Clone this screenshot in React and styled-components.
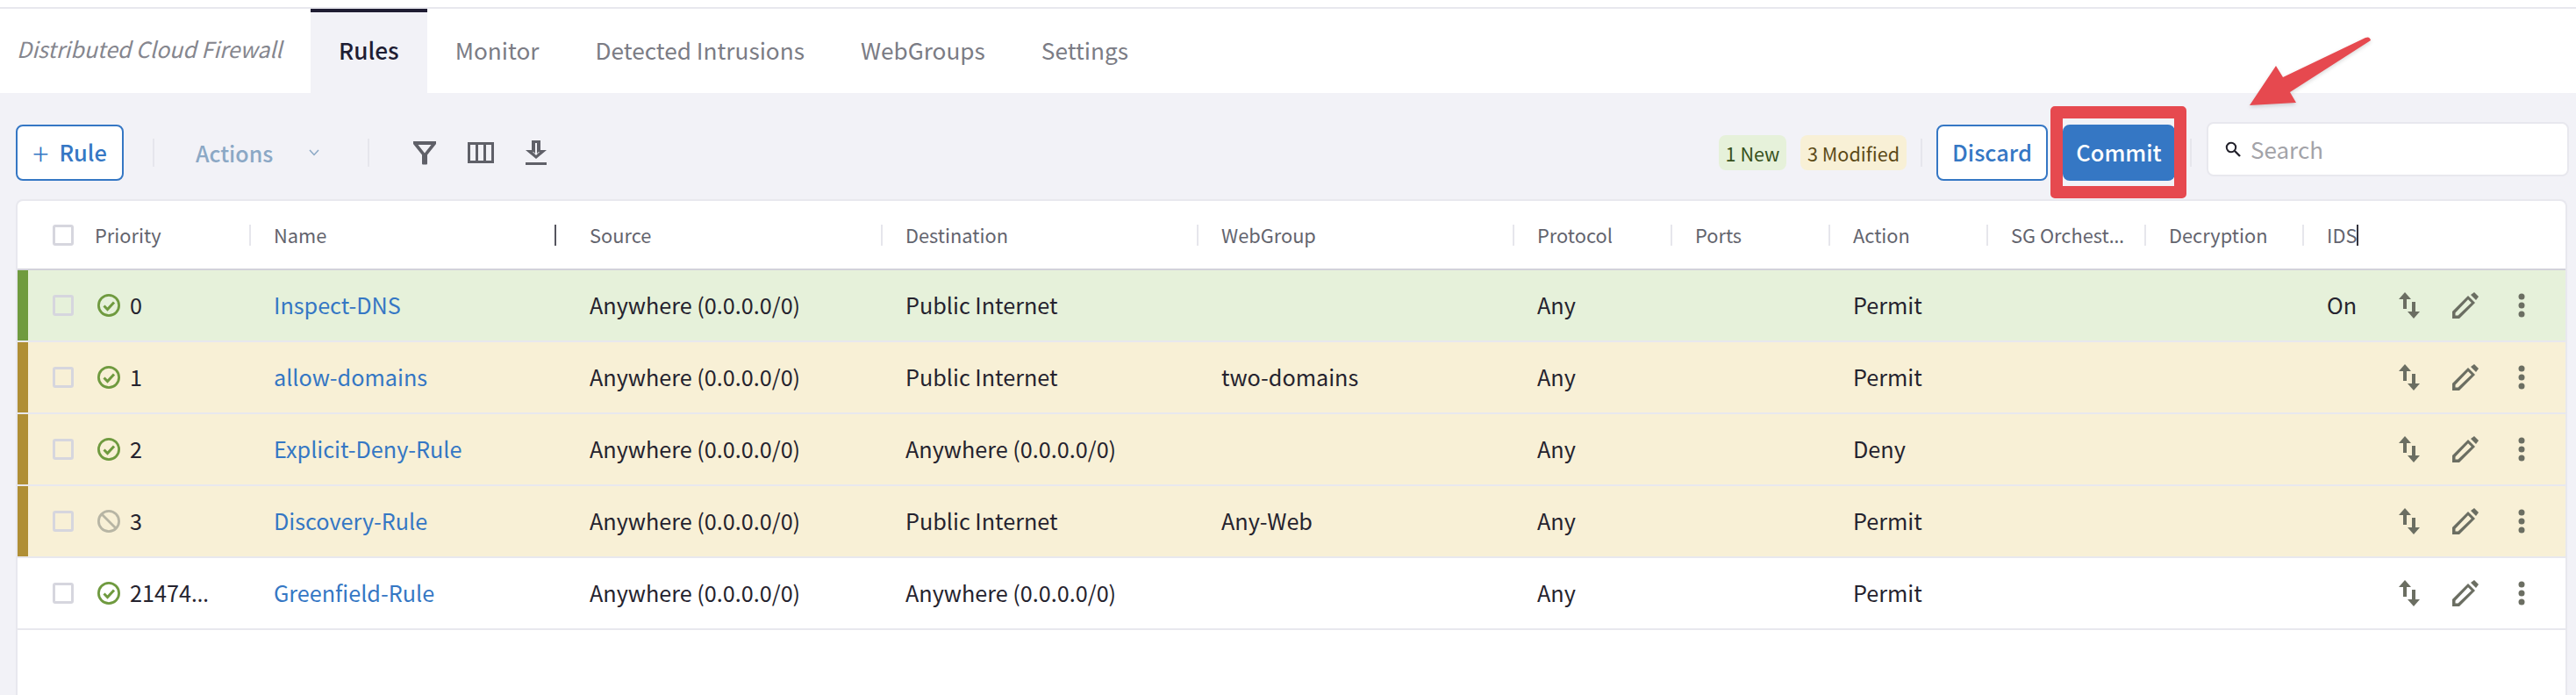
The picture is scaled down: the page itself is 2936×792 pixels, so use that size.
import React from 'react'
import styled, { createGlobalStyle } from 'styled-components'

const font = `"Noto Sans CJK SC", "Noto Sans", sans-serif`

const GlobalStyle = createGlobalStyle`
  html, body {
    margin: 0;
    height: 792px;
    overflow: hidden;
    background: #f2f2f7;
    font-family: ${font};
  }
  * {
    box-sizing: border-box;
  }
`

const COLUMNS = '264px 360px 360px 360px 360px 180px 180px 180px 180px 180px 1fr'

const tabs = ['Rules', 'Monitor', 'Detected Intrusions', 'WebGroups', 'Settings']

const columns = [
  { label: 'Name' },
  { label: 'Source', dark: true },
  { label: 'Destination' },
  { label: 'WebGroup' },
  { label: 'Protocol' },
  { label: 'Ports' },
  { label: 'Action' },
  { label: 'SG Orchest', cut: true },
  { label: 'Decryption' },
]

const rules = [
  { id: 1, state: 'new', enabled: true, priority: '0', name: 'Inspect-DNS', source: 'Anywhere (0.0.0.0/0)', destination: 'Public Internet', webgroup: '', action: 'Permit', ids: 'On' },
  { id: 2, state: 'modified', enabled: true, priority: '1', name: 'allow-domains', source: 'Anywhere (0.0.0.0/0)', destination: 'Public Internet', webgroup: 'two-domains', action: 'Permit', ids: '' },
  { id: 3, state: 'modified', enabled: true, priority: '2', name: 'Explicit-Deny-Rule', source: 'Anywhere (0.0.0.0/0)', destination: 'Anywhere (0.0.0.0/0)', webgroup: '', action: 'Deny', ids: '' },
  { id: 4, state: 'modified', enabled: false, priority: '3', name: 'Discovery-Rule', source: 'Anywhere (0.0.0.0/0)', destination: 'Public Internet', webgroup: 'Any-Web', action: 'Permit', ids: '' },
  { id: 5, state: 'none', enabled: true, priority: '21474', cut: true, name: 'Greenfield-Rule', source: 'Anywhere (0.0.0.0/0)', destination: 'Anywhere (0.0.0.0/0)', webgroup: '', action: 'Permit', ids: '' },
]

const rowColors = {
  new: { bg: '#e6f1da', stripe: '#709b3f' },
  modified: { bg: '#f8f0d6', stripe: '#b08f35' },
  none: { bg: '#ffffff', stripe: 'transparent' },
}

const FilterIcon = () => (
  <svg width='26' height='28' viewBox='0 0 26 28'>
    <path fill='#5f6068' fillRule='evenodd' d='M0 1h26v3L16 16.500V26.500q0 1-1 1h-4q-1 0-1-1V16.500L0 4zM5.500 5 13 14.500 20.500 5z' />
  </svg>
)

const ColumnsIcon = () => (
  <svg width='30' height='24' viewBox='0 0 30 24'>
    <path fill='#5f6068' fillRule='evenodd' d='M0 0h30v24H0zM3 3v18h6V3zM12 3v18h6V3zM21 3v18h6V3z' />
  </svg>
)

const DownloadIcon = () => (
  <svg width='24' height='28' viewBox='0 0 24 28'>
    <path fill='#5f6068' fillRule='evenodd' d='M7 0h10v11h7L12 21 0 11h7zM11 3v12l-2-2-1 0 4 4 4-4-1 0-2 2V3z' />
    <rect x='0' y='25' width='24' height='3' fill='#5f6068' />
  </svg>
)

const SearchIcon = () => (
  <svg width='18' height='18' viewBox='0 0 18 18' fill='none' stroke='#22212b'>
    <circle cx='7' cy='7' r='5.200' strokeWidth='2' />
    <path d='M11 11l6 6' strokeWidth='2.400' />
  </svg>
)

const EnabledIcon = () => (
  <svg width='26' height='26' viewBox='0 0 26 26' fill='none' stroke='#6f9a3f' strokeWidth='2.800'>
    <circle cx='13' cy='13' r='11.600' />
    <path d='M7.500 13.500l4 4 7.500-8' strokeWidth='3' />
  </svg>
)

const DisabledIcon = () => (
  <svg width='26' height='26' viewBox='0 0 26 26' fill='none' stroke='#b7b5a4' strokeWidth='2.800'>
    <circle cx='13' cy='13' r='11.600' />
    <path d='M4.500 4.500l17 17' />
  </svg>
)

const SortIcon = () => (
  <svg width='24' height='30' viewBox='0 0 24 30'>
    <path fill='#6b6e62' d='M7 0l7 8H9v11H5V8H0zM15 11h4v11h5l-7 8-7-8h5z' />
  </svg>
)

const PencilIcon = () => (
  <svg width='30' height='30' viewBox='0 0 30 30'>
    <path fill='#6b6e62' fillRule='evenodd' d='M0 30V22L18 4 26 12 8 30zM3.500 23.500V26.500H6.500L21.800 12 18 8.200z' />
    <path fill='#6b6e62' d='M21 3L25 0l5 5-3 4z' />
  </svg>
)

const DotsIcon = () => (
  <svg width='8' height='28' viewBox='0 0 8 28'>
    <g fill='#6b6e62'>
      <circle cx='4' cy='4' r='3.500' />
      <circle cx='4' cy='14' r='3.500' />
      <circle cx='4' cy='24' r='3.500' />
    </g>
  </svg>
)

const Arrow = styled.svg`
  position: absolute;
  left: 2550px;
  top: 35px;
  filter: drop-shadow(0 2px 2px rgba(0, 0, 0, 0.15));
`

const Page = styled.div`
  position: relative;
  height: 792px;
  display: flex;
  flex-direction: column;
  overflow: hidden;
  background: #f2f2f7;
`

const TopStrip = styled.div`
  height: 10px;
  background: #fff;
  border-bottom: 2px solid #e8e8ee;
`

const TabBar = styled.div`
  height: 96px;
  background: #fff;
  display: flex;
  align-items: stretch;
`

const ModuleTitle = styled.div`
  width: 354px;
  padding-left: 19px;
  padding-bottom: 6px;
  display: flex;
  align-items: center;
  font-size: 25px;
  font-style: italic;
  color: #85868e;
`

const Tab = styled.div`
  padding: 0 32px 6px;
  display: flex;
  align-items: center;
  font-size: 26.2px;
  font-weight: ${(p) => (p.$active ? 500 : 400)};
  color: ${(p) => (p.$active ? '#1f1d33' : '#7b7c85')};
  background: ${(p) => (p.$active ? '#f2f2f7' : 'transparent')};
  border-top: 4px solid ${(p) => (p.$active ? '#1f1d33' : 'transparent')};
`

const Toolbar = styled.div`
  height: 121px;
  padding: 36px 8px 21px 18px;
  display: flex;
  align-items: center;
`

const Button = styled.button`
  width: ${(p) => p.$width}px;
  height: 64px;
  padding: 0;
  display: flex;
  align-items: center;
  justify-content: center;
  font-family: inherit;
  font-size: 25.4px;
  font-weight: 500;
  line-height: 1;
  border-radius: 8px;
  border: 2px solid #3577c4;
  color: ${(p) => (p.$primary ? '#fff' : '#3577c4')};
  background: ${(p) => (p.$primary ? '#3577c4' : '#fff')};
`

const Plus = styled.span`
  font-size: 34px;
  font-weight: 300;
  margin-right: 12px;
`

const Divider = styled.div`
  width: 2px;
  height: 32px;
  background: #e6e6ec;
  margin: ${(p) => p.$margin};
`

const ActionsMenu = styled.div`
  width: 141px;
  display: flex;
  align-items: center;
  justify-content: space-between;
  margin-right: 55px;
  font-size: 25px;
  font-weight: 500;
  color: #8ba8c5;
`

const ToolIcons = styled.div`
  display: flex;
  align-items: center;
  gap: 36px;
`

const ToolIcon = styled.span`
  display: flex;
`

const RightGroup = styled.div`
  margin-left: auto;
  display: flex;
  align-items: center;
`

const Chip = styled.span`
  width: ${(p) => p.$width}px;
  height: 40px;
  margin-right: 16px;
  display: flex;
  align-items: center;
  justify-content: center;
  border-radius: 8px;
  font-size: 21.6px;
  white-space: nowrap;
  background: ${(p) => (p.$kind === 'new' ? '#e6f1da' : '#f8f0d6')};
  color: ${(p) => (p.$kind === 'new' ? '#38511c' : '#5c4a16')};
`

const CommitWrap = styled.div`
  position: relative;
  margin-left: 17px;
  &::after {
    content: '';
    position: absolute;
    top: -21px;
    bottom: -20px;
    left: -14px;
    right: -13px;
    border: 14px solid #e6494f;
    border-radius: 5px;
  }
`

const SearchBox = styled.div`
  width: 413px;
  height: 62px;
  margin-bottom: 9px;
  padding-left: 19px;
  display: flex;
  align-items: center;
  gap: 11px;
  background: #fff;
  border: 2px solid #e8e8ee;
  border-radius: 8px;
  font-size: 26px;
  color: #a3a3a8;
`

const Card = styled.div`
  flex: 1;
  margin: 0 10px 0 18px;
  background: #fff;
  border: 2px solid #e8e8ee;
  border-bottom: none;
  border-radius: 8px 8px 0 0;
`

const HeaderRow = styled.div`
  display: grid;
  grid-template-columns: ${COLUMNS};
  height: 79px;
  border-bottom: 2px solid #d2d2da;
  font-size: 21.8px;
  color: #63646e;
`

const HeaderCell = styled.div`
  position: relative;
  min-width: 0;
  padding-left: 28px;
  display: flex;
  align-items: center;
  &::before {
    content: '';
    position: absolute;
    top: 27px;
    left: ${(p) => (p.$dark ? '-12px' : '0')};
    width: 2px;
    height: 24px;
    background: ${(p) => (p.$dark ? '#55555f' : '#e6e6ec')};
  }
`

const HeaderLabel = styled.span`
  white-space: nowrap;
`

const Dots = styled.span`
  font-family: 'Noto Sans', sans-serif;
  letter-spacing: 1px;
`

const Caret = styled.span`
  width: 2px;
  height: 24px;
  background: #33323c;
`

const HeaderFirst = styled.div`
  padding-left: 40px;
  display: flex;
  align-items: center;
  gap: 24px;
`

const CheckBox = styled.span`
  width: 24px;
  height: 24px;
  flex: none;
  background: ${(p) => (p.$tinted ? 'transparent' : '#fff')};
  border: 3px solid #d6d6de;
  border-radius: 3px;
`

const Row = styled.div`
  display: grid;
  grid-template-columns: ${COLUMNS};
  height: 82px;
  border-bottom: 2px solid #e8e8ee;
  font-size: 25.2px;
  color: #25232e;
  background: ${(p) => rowColors[p.$state].bg};
`

const FirstCell = styled.div`
  display: flex;
  align-items: center;
`

const Stripe = styled.span`
  width: 12px;
  align-self: stretch;
  flex: none;
  margin-right: 28px;
  background: ${(p) => rowColors[p.$state].stripe};
`

const Status = styled.span`
  display: flex;
  margin: 0 11px 0 27px;
`

const Priority = styled.span`
  padding-bottom: 2px;
  white-space: nowrap;
`

const Cell = styled.div`
  min-width: 0;
  padding: 0 0 2px 28px;
  display: flex;
  align-items: center;
  white-space: nowrap;
`

const NameLink = styled.a`
  color: #3577c4;
  text-decoration: none;
`

const RowActions = styled.div`
  margin: 2px 0 0 auto;
  padding-right: 18px;
  display: flex;
`

const RowAction = styled.span`
  width: 64px;
  display: flex;
  align-items: center;
  justify-content: center;
`

const App = () => {
  return <Page>
    <GlobalStyle />
    <TopStrip />
    <TabBar>
      <ModuleTitle>Distributed Cloud Firewall</ModuleTitle>
      {tabs.map((tab, i) => <Tab key={tab} $active={i === 0}>{tab}</Tab>)}
    </TabBar>

    <Toolbar>
      <Button $width={123}><Plus>+</Plus>Rule</Button>
      <Divider $margin='0 47px 0 33px' />
      <ActionsMenu>
        Actions
        <svg width='12' height='8' viewBox='0 0 12 8' fill='none' stroke='#8ba8c5' strokeWidth='1.500'>
          <path d='M1 1l5 5.500L11 1' />
        </svg>
      </ActionsMenu>
      <Divider $margin='0 50px 0 0' />
      <ToolIcons>
        <ToolIcon><FilterIcon /></ToolIcon>
        <ToolIcon><ColumnsIcon /></ToolIcon>
        <ToolIcon><DownloadIcon /></ToolIcon>
      </ToolIcons>
      <RightGroup>
        <Chip $kind='new' $width={77}>1 New</Chip>
        <Chip $kind='modified' $width={121}>3 Modified</Chip>
        <Divider $margin='0 16px 0 0' />
        <Button $width={127}>Discard</Button>
        <CommitWrap>
          <Button $primary $width={128}>Commit</Button>
        </CommitWrap>
        <Divider $margin='0 17px' />
        <SearchBox><SearchIcon />Search</SearchBox>
      </RightGroup>
    </Toolbar>

    <Card>
      <HeaderRow>
        <HeaderFirst>
          <CheckBox />
          <HeaderLabel>Priority</HeaderLabel>
        </HeaderFirst>
        {columns.map((col) => {
          return <HeaderCell key={col.label} $dark={col.dark}>
            <HeaderLabel>{col.label}{col.cut && <Dots>…</Dots>}</HeaderLabel>
          </HeaderCell>
        })}
        <HeaderCell>
          <HeaderLabel>IDS</HeaderLabel>
          <Caret />
        </HeaderCell>
      </HeaderRow>

      {rules.map((rule) => {
        return <Row key={rule.id} $state={rule.state}>
          <FirstCell>
            <Stripe $state={rule.state} />
            <CheckBox $tinted={rule.state !== 'none'} />
            <Status>{rule.enabled ? <EnabledIcon /> : <DisabledIcon />}</Status>
            <Priority>{rule.priority}{rule.cut && <Dots>…</Dots>}</Priority>
          </FirstCell>
          <Cell><NameLink href='#'>{rule.name}</NameLink></Cell>
          <Cell>{rule.source}</Cell>
          <Cell>{rule.destination}</Cell>
          <Cell>{rule.webgroup}</Cell>
          <Cell>Any</Cell>
          <Cell />
          <Cell>{rule.action}</Cell>
          <Cell />
          <Cell />
          <Cell>
            {rule.ids}
            <RowActions>
              <RowAction><SortIcon /></RowAction>
              <RowAction><PencilIcon /></RowAction>
              <RowAction><DotsIcon /></RowAction>
            </RowActions>
          </Cell>
        </Row>
      })}
    </Card>

    <Arrow width='160' height='95' viewBox='0 0 160 95'>
      <path fill='#e6494f' d='M14 85L44 40 52 53 146 8q5-2 6 3L60 70 67 82z' />
    </Arrow>
  </Page>
}

export default App
